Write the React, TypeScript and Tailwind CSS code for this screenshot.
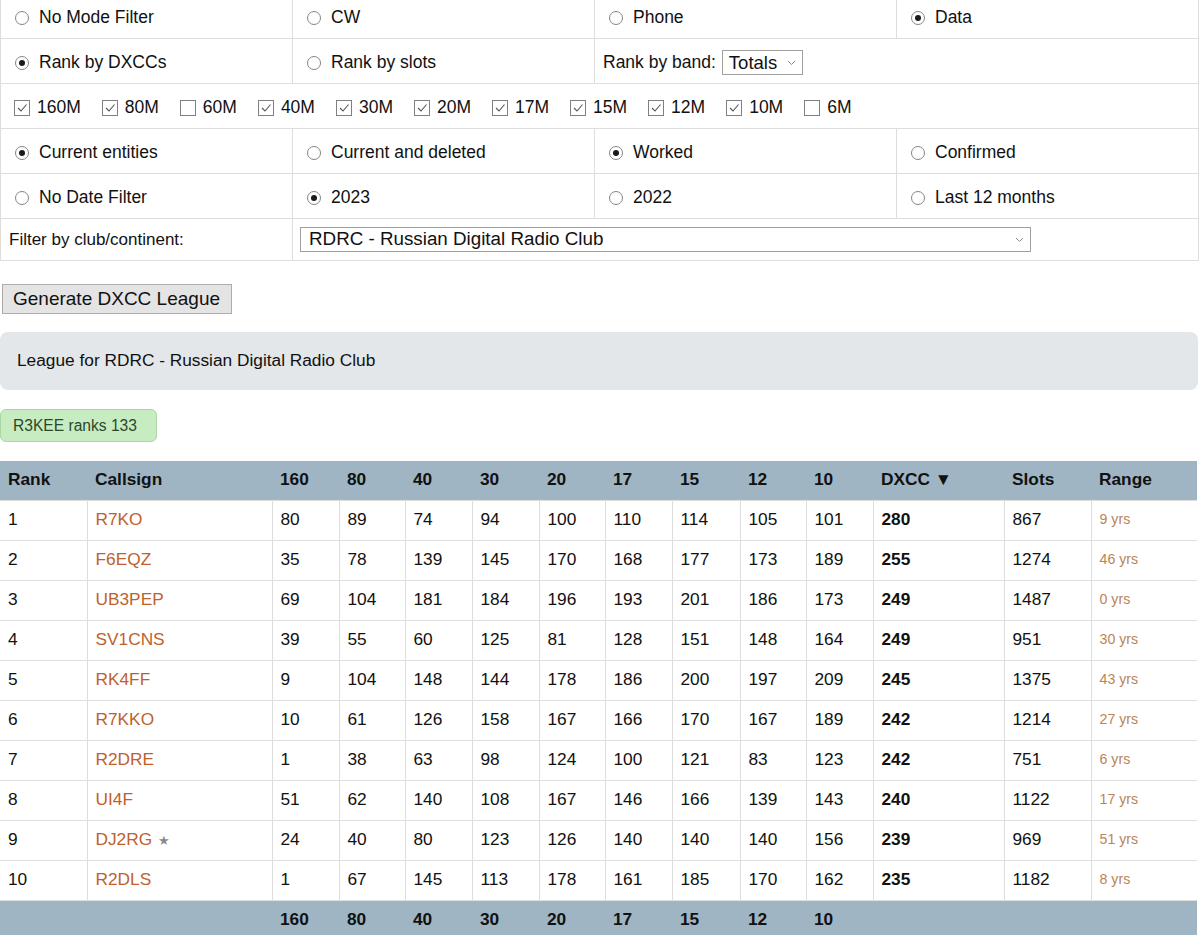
import React from 'react';

const font = { fontFamily: '"Liberation Sans", Arial, sans-serif' };

function Radio({ checked, label }: { checked?: boolean; label: string }) {
  return (
    <div className="flex items-center gap-[10px] pl-[6px]">
      <span className="w-[14px] h-[14px] rounded-full border border-[#858585] bg-white flex items-center justify-center shrink-0">
        {checked && <span className="w-[6px] h-[6px] rounded-full bg-[#1a1a1a]"></span>}
      </span>
      <span>{label}</span>
    </div>
  );
}

function Check({ checked, label }: { checked?: boolean; label: string }) {
  return (
    <div className="flex items-center gap-[7px]">
      <span className="w-[16px] h-[16px] border border-[#808080] bg-white flex items-center justify-center shrink-0">
        {checked && (
          <svg width="12" height="12" viewBox="0 0 12 12">
            <polyline points="2,6 5,9 10.5,2.5" fill="none" stroke="#555" strokeWidth="1.1" />
          </svg>
        )}
      </span>
      <span>{label}</span>
    </div>
  );
}

function Chevron() {
  return (
    <svg width="9" height="6" viewBox="0 0 9 6">
      <polyline points="1,1 4.5,4.5 8,1" fill="none" stroke="#8a8a8a" strokeWidth="1" />
    </svg>
  );
}

const bands = [
  ['160M', true], ['80M', true], ['60M', false], ['40M', true], ['30M', true], ['20M', true],
  ['17M', true], ['15M', true], ['12M', true], ['10M', true], ['6M', false],
] as const;

const rows = [
  [1, 'R7KO', 80, 89, 74, 94, 100, 110, 114, 105, 101, 280, 867, 9],
  [2, 'F6EQZ', 35, 78, 139, 145, 170, 168, 177, 173, 189, 255, 1274, 46],
  [3, 'UB3PEP', 69, 104, 181, 184, 196, 193, 201, 186, 173, 249, 1487, 0],
  [4, 'SV1CNS', 39, 55, 60, 125, 81, 128, 151, 148, 164, 249, 951, 30],
  [5, 'RK4FF', 9, 104, 148, 144, 178, 186, 200, 197, 209, 245, 1375, 43],
  [6, 'R7KKO', 10, 61, 126, 158, 167, 166, 170, 167, 189, 242, 1214, 27],
  [7, 'R2DRE', 1, 38, 63, 98, 124, 100, 121, 83, 123, 242, 751, 6],
  [8, 'UI4F', 51, 62, 140, 108, 167, 146, 166, 139, 143, 240, 1122, 17],
  [9, 'DJ2RG', 24, 40, 80, 123, 126, 140, 140, 140, 156, 239, 969, 51],
  [10, 'R2DLS', 1, 67, 145, 113, 178, 161, 185, 170, 162, 235, 1182, 8],
];

const bandCols = ['160', '80', '40', '30', '20', '17', '15', '12', '10'];

const cell = 'border border-[#dedede] px-[8px] pt-[3px]';

export default function App() {
  return (
    <div className="min-h-screen bg-white text-[#111] overflow-hidden" style={font}>
      <div className="w-[1198px] -mt-[7px]">
        {/* Filters */}
        <table className="w-[1198px] table-fixed border-collapse text-[17.5px]">
          <colgroup>
            <col className="w-[292px]" />
            <col className="w-[302px]" />
            <col className="w-[302px]" />
            <col className="w-[302px]" />
          </colgroup>
          <tbody>
            <tr className="h-[45px]">
              <td className={cell}><Radio label="No Mode Filter" /></td>
              <td className={cell}><Radio label="CW" /></td>
              <td className={cell}><Radio label="Phone" /></td>
              <td className={cell}><Radio checked label="Data" /></td>
            </tr>
            <tr className="h-[45px]">
              <td className={cell}><Radio checked label="Rank by DXCCs" /></td>
              <td className={cell}><Radio label="Rank by slots" /></td>
              <td colSpan={2} className={cell}>
                <div className="flex items-center gap-[6px]">
                  <span>Rank by band:</span>
                  <div className="w-[81px] h-[25px] border border-[#a0a0a0] bg-white flex items-center justify-between pl-[6px] pr-[6px] text-[18.5px]">
                    <span>Totals</span>
                    <Chevron />
                  </div>
                </div>
              </td>
            </tr>
            <tr className="h-[45px]">
              <td colSpan={4} className="border border-[#dedede] pl-[13px] pt-[3px]">
                <div className="flex items-center gap-[21px]">
                  {bands.map(([b, c]) => (
                    <Check key={b} checked={c} label={b} />
                  ))}
                </div>
              </td>
            </tr>
            <tr className="h-[45px]">
              <td className={cell}><Radio checked label="Current entities" /></td>
              <td className={cell}><Radio label="Current and deleted" /></td>
              <td className={cell}><Radio checked label="Worked" /></td>
              <td className={cell}><Radio label="Confirmed" /></td>
            </tr>
            <tr className="h-[45px]">
              <td className={cell}><Radio label="No Date Filter" /></td>
              <td className={cell}><Radio checked label="2023" /></td>
              <td className={cell}><Radio label="2022" /></td>
              <td className={cell}><Radio label="Last 12 months" /></td>
            </tr>
            <tr className="h-[42px]">
              <td className="border border-[#dedede] px-[8px] text-[17px]">Filter by club/continent:</td>
              <td colSpan={3} className="border border-[#dedede] pl-[7px]">
                <div className="w-[731px] h-[25px] border border-[#a0a0a0] bg-white flex items-center justify-between pl-[8px] pr-[6px] text-[18.8px]">
                  <span>RDRC - Russian Digital Radio Club</span>
                  <Chevron />
                </div>
              </td>
            </tr>
          </tbody>
        </table>

        {/* Action */}
        <button className="mt-[23px] ml-[2px] w-[230px] h-[30px] bg-[#e4e4e4] border border-[#adadad] text-[19px] text-left pl-[10px] text-[#111]">
          Generate DXCC League
        </button>

        <div className="mt-[18px] h-[58px] bg-[#e3e7ea] rounded-[8px] flex items-center pl-[17px] text-[17.3px]">
          League for RDRC - Russian Digital Radio Club
        </div>

        <div className="mt-[19px] w-[157px] h-[33px] bg-[#c8ecc1] border border-[#a9d8a2] rounded-[6px] flex items-center pl-[12px] text-[15.6px] text-[#2b4a2b]">
          R3KEE ranks 133
        </div>

        {/* League table */}
        <table className="mt-[19px] w-[1197px] table-fixed border-collapse text-[17.3px]">
          <colgroup>
            <col className="w-[87px]" />
            <col className="w-[185px]" />
            <col className="w-[67px]" />
            <col className="w-[66px]" />
            <col className="w-[67px]" />
            <col className="w-[67px]" />
            <col className="w-[66px]" />
            <col className="w-[67px]" />
            <col className="w-[68px]" />
            <col className="w-[66px]" />
            <col className="w-[67px]" />
            <col className="w-[131px]" />
            <col className="w-[87px]" />
            <col className="w-[106px]" />
          </colgroup>
          <thead>
            <tr className="h-[39px] bg-[#9fb5c4]">
              {['Rank', 'Callsign', ...bandCols, 'DXCC ▼', 'Slots', 'Range'].map((h) => (
                <th key={h} className="text-left font-bold px-[8px]">{h}</th>
              ))}
            </tr>
          </thead>
          <tbody>
            {rows.map((r) => (
              <tr key={r[0]} className="h-[40px]">
                <td className="border border-[#dedede] border-l-0 px-[8px]">{r[0]}</td>
                <td className="border border-[#dedede] px-[8px]">
                  <span className="text-[#c0612b]">{r[1]}</span>
                  {r[1] === 'DJ2RG' && <span className="ml-[6px] text-[13px] text-[#8a8a8a]">★</span>}
                </td>
                {r.slice(2, 11).map((v, i) => (
                  <td key={i} className="border border-[#dedede] px-[8px]">{v}</td>
                ))}
                <td className="border border-[#dedede] px-[8px] font-bold">{r[11]}</td>
                <td className="border border-[#dedede] px-[8px]">{r[12]}</td>
                <td className="border border-[#dedede] border-r-0 px-[8px] text-[14.2px] text-[#bb8458]">{r[13]} yrs</td>
              </tr>
            ))}
          </tbody>
          <tfoot>
            <tr className="h-[40px] bg-[#9fb5c4]">
              <th></th>
              <th></th>
              {bandCols.map((h) => (
                <th key={h} className="text-left font-bold px-[8px]">{h}</th>
              ))}
              <th></th>
              <th></th>
              <th></th>
            </tr>
          </tfoot>
        </table>
      </div>
    </div>
  );
}
